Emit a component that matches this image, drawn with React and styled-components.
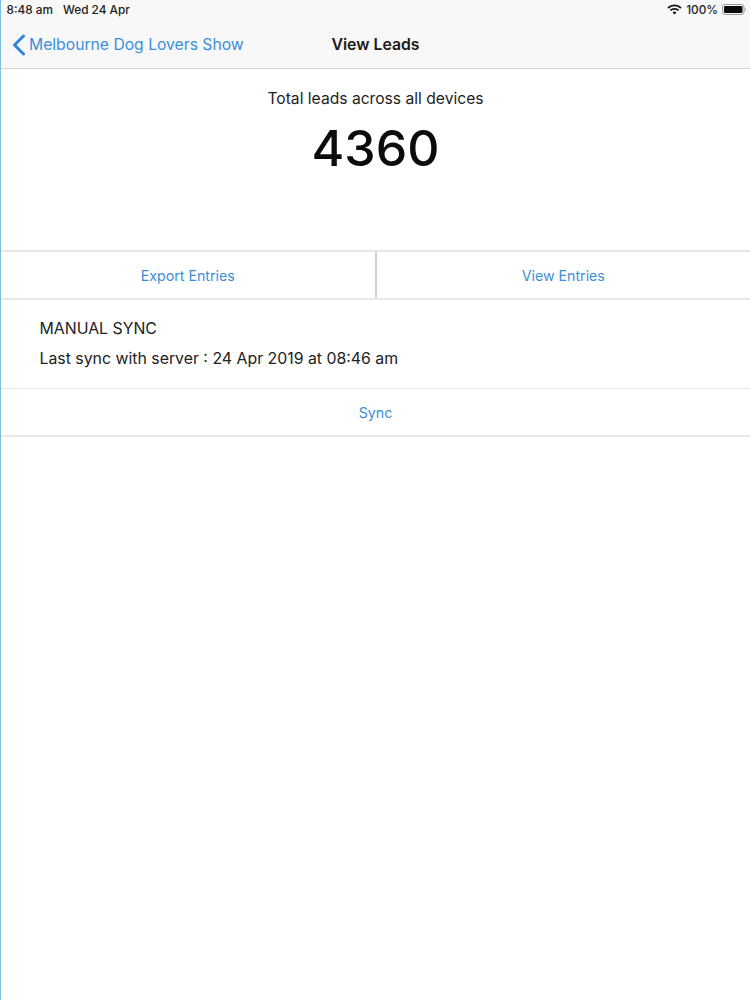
import React from "react";
import styled, { createGlobalStyle } from "styled-components";

const Global = createGlobalStyle`
  html, body { margin: 0; padding: 0; background: #fff; }
  * { box-sizing: border-box; }
`;

const Page = styled.div`
  width: 750px;
  height: 1000px;
  overflow: hidden;
  background: #fff;
  border-left: 1.5px solid #7fc0de;
  font-family: Inter, "Liberation Sans", sans-serif;
  color: #1c1c1e;
`;

const Header = styled.header`
  height: 69px;
  background: #f8f8f8;
  border-bottom: 1px solid #d4d4d6;
  display: flex;
  flex-direction: column;
`;

const StatusBar = styled.div`
  height: 19px;
  padding: 0 3px 0 5.5px;
  display: flex;
  align-items: center;
  justify-content: space-between;
  font-size: 11.8px;
  font-weight: 500;
  color: #222;
`;

const StatusGroup = styled.div`
  display: flex;
  align-items: center;
  gap: ${p => p.$gap}px;
`;

const NavBar = styled.nav`
  flex: 1;
  display: grid;
  grid-template-columns: minmax(0, 1fr) auto minmax(0, 1fr);
  align-items: center;
  padding: 2px 11px 0 11px;
`;

const BackLink = styled.div`
  display: flex;
  align-items: center;
  gap: 3px;
  color: #3a8fdc;
  font-size: 15.7px;
  white-space: nowrap;
`;

const NavTitle = styled.div`
  font-size: 15.8px;
  font-weight: 600;
  color: #1a1a1a;
`;

const Summary = styled.section`
  height: 181px;
  padding-top: 20px;
  display: flex;
  flex-direction: column;
  align-items: center;
`;

const SummaryLabel = styled.div`
  font-size: 15.65px;
  line-height: 19px;
  color: #222;
`;

const Count = styled.div`
  margin-top: 10px;
  font-size: 50px;
  line-height: 60px;
  font-weight: 500;
  color: #0c0c0c;
`;

const ButtonRow = styled.div`
  height: ${p => p.$h}px;
  display: flex;
  border-top: ${p => p.$top}px solid #e6e6e6;
  border-bottom: 2px solid #e9e9e9;
`;

const ActionButton = styled.div`
  flex: 1;
  display: flex;
  align-items: center;
  justify-content: center;
  font-size: 14.2px;
  color: #3b8fd9;
  & + & { border-left: 2px solid #d2d2d2; }
`;

const SyncInfo = styled.section`
  height: 88px;
  padding: 19px 0 0 38.5px;
  font-size: 15.85px;
  line-height: 20px;
  color: #222;
  display: flex;
  flex-direction: column;
  gap: 10px;
`;

function Wifi() {
  return (
    <svg width="15" height="11" viewBox="0 0 15 11" fill="none" stroke="#111" strokeWidth="1.8">
      <path d="M1 4 A9.5 9.5 0 0 1 14 4" />
      <path d="M3.4 6.4 A6 6 0 0 1 11.6 6.4" />
      <path d="M7.5 10.5 L5.6 8.5 A2.7 2.7 0 0 1 9.4 8.5 Z" fill="#111" stroke="none" />
    </svg>
  );
}

function Battery() {
  return (
    <svg width="25" height="11" viewBox="0 0 25 11">
      <rect x="0.5" y="0.5" width="21.5" height="10" rx="2.5" fill="none" stroke="#999" />
      <rect x="2" y="2" width="18.5" height="7" rx="1.2" fill="#0b0b0b" />
      <path d="M23 3.8 a2 2 0 0 1 0 3.4 z" fill="#aaa" />
    </svg>
  );
}

function Chevron() {
  return (
    <svg width="14" height="22" viewBox="0 0 14 22" fill="none" stroke="#2f86dc" strokeWidth="3" strokeLinecap="round" strokeLinejoin="round">
      <path d="M11.5 2 L2.5 11 L11.5 20" />
    </svg>
  );
}

export default function App() {
  return (
    <Page>
      <Global />
      <Header>
        <StatusBar>
          <StatusGroup $gap={10}>
            <span>8:48 am</span>
            <span>Wed 24 Apr</span>
          </StatusGroup>
          <StatusGroup $gap={4}>
            <Wifi />
            <span>100%</span>
            <Battery />
          </StatusGroup>
        </StatusBar>
        <NavBar>
          <BackLink>
            <Chevron />
            <span>Melbourne Dog Lovers Show</span>
          </BackLink>
          <NavTitle>View Leads</NavTitle>
          <span />
        </NavBar>
      </Header>
      <Summary>
        <SummaryLabel>Total leads across all devices</SummaryLabel>
        <Count>4360</Count>
      </Summary>
      <ButtonRow $h={50} $top={2}>
        <ActionButton>Export Entries</ActionButton>
        <ActionButton>View Entries</ActionButton>
      </ButtonRow>
      <SyncInfo>
        <div>MANUAL SYNC</div>
        <div>Last sync with server : 24 Apr 2019 at 08:46 am</div>
      </SyncInfo>
      <ButtonRow $h={49} $top={1}>
        <ActionButton>Sync</ActionButton>
      </ButtonRow>
    </Page>
  );
}
